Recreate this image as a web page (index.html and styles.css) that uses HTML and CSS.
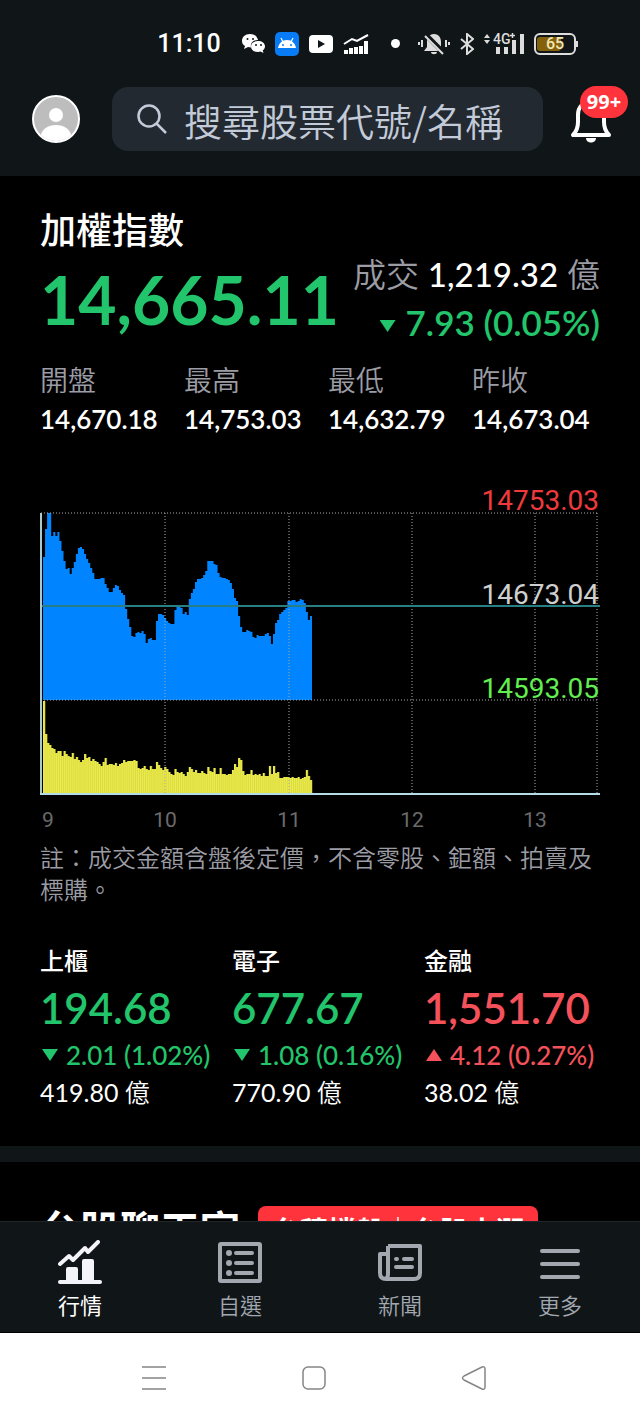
FILE: index.html
```
<!DOCTYPE html>
<html lang="zh-Hant">
<head>
  <meta charset="UTF-8">
  <title>加權指數</title>
  <meta name="viewport" content="width=device-width, initial-scale=1.0" />
  <link rel="stylesheet" href="styles.css">
</head>
<body>

<div class="status-bar">
  <span class="clock">11:10</span>
  <svg class="wechat" width="24" height="22" viewBox="0 0 24 22">
    <path fill="#fff" d="M9 1C4 1 1 4 1 8c0 2 1 4 3 5l-1 3 4-2 3 .4C9 9 13 7 17 7 16 3 13 1 9 1z"/>
    <path fill="#fff" d="M17 8c-4 0-7 2-7 5.500S13 19 17 19l2.500-.4L22.500 20l-.8-2.500C23 16.500 24 15 24 13.500 24 10 21 8 17 8z"/>
    <g fill="#101518"><circle cx="6.500" cy="6" r="1"/><circle cx="12" cy="6" r="1"/><circle cx="15" cy="12" r="1"/><circle cx="20" cy="12" r="1"/></g>
  </svg>
  <svg width="24" height="24" viewBox="0 0 24 24">
    <rect width="24" height="24" rx="5" fill="#087cf5"/>
    <path fill="#fff" d="M3 16c1-5 4-8 9-8s8 3 9 8z"/>
    <path stroke="#fff" stroke-width="1.200" d="M6 6l2 4M18 6l-2 4"/>
    <circle cx="8" cy="13" r="1" fill="#087cf5"/><circle cx="16" cy="13" r="1" fill="#087cf5"/>
  </svg>
  <svg width="24" height="18" viewBox="0 0 24 18">
    <rect width="24" height="18" rx="4" fill="#fff"/>
    <path fill="#101518" d="M9 5l7 4-7 4z"/>
  </svg>
  <svg width="26" height="20" viewBox="0 0 26 20">
    <path fill="none" stroke="#fff" stroke-width="2" d="M1 10l8-5 5 2L25 1"/>
    <path stroke="#fff" stroke-width="4" d="M3 20v-4M8 20v-6M13 20v-7M18 20v-8M23 20V7"/>
  </svg>
  <span class="dot"></span>
  <svg width="32" height="22" viewBox="0 0 32 22">
    <path fill="#ddd" d="M16 1c-5 0-7 4-7 8v5l-3 4h20l-3-4V9c0-4-2-8-7-8zM13 19h6c0 3-6 3-6 0z"/>
    <path stroke="#101518" stroke-width="5" d="M8 2l19 19"/>
    <path stroke="#ddd" stroke-width="2" d="M7 3l18 18M1 9v3M4 7v7M28 7v7M31 9v3"/>
  </svg>
  <svg width="14" height="22" viewBox="0 0 14 22">
    <path fill="none" stroke="#ddd" stroke-width="2" d="M1 6l12 10-6 5V1l6 5L1 16"/>
  </svg>
  <svg class="signal" width="40" height="22" viewBox="0 0 40 22">
    <path fill="#ddd" d="M0 5l3-4 3 4zM0 7h6l-3 4zM12 14h4v7h-4zM20 14h4v7h-4zM28 7h4v14h-4zM36 1h4v20h-4z"/>
    <text x="9" y="11">4G</text>
    <path stroke="#ddd" stroke-width="1.500" d="M26 2.500h5M28.500 0v5"/>
  </svg>
  <svg class="battery" width="45" height="22" viewBox="0 0 45 22">
    <rect x="3" y="4" width="24" height="14" rx="3" fill="#84610a"/>
    <rect x="1" y="1" width="40" height="20" rx="5" fill="none" stroke="#ddd" stroke-width="2"/>
    <path stroke="#ddd" stroke-width="2" d="M43 8v6"/>
    <text x="21" y="16">65</text>
  </svg>
</div>

<header class="top-bar">
  <button class="avatar" aria-label="帳號">
    <svg width="48" height="48" viewBox="0 0 48 48">
      <clipPath id="face"><circle cx="24" cy="24" r="22"/></clipPath>
      <circle cx="24" cy="24" r="23" fill="#bdbdbd" stroke="#fff" stroke-width="2"/>
      <g fill="#fff" clip-path="url(#face)"><circle cx="24" cy="20" r="7"/><ellipse cx="24" cy="41" rx="15" ry="11"/></g>
    </svg>
  </button>
  <label class="search">
    <svg width="32" height="32" viewBox="0 0 32 32" fill="none" stroke="#c3cad8" stroke-width="2.500">
      <circle cx="13" cy="13" r="10.500"/><path d="M20 20l10 10"/>
    </svg>
    <input type="text" placeholder="搜尋股票代號/名稱" aria-label="搜尋">
  </label>
  <button class="bell" aria-label="通知">
    <svg width="42" height="46" viewBox="0 0 42 46">
      <path fill="none" stroke="#fff" stroke-width="4" stroke-linejoin="round" d="M3 37h36c-4-4-5-8-5-13v-7c0-8-5-13-13-13S8 9 8 17v7c0 5-1 9-5 13z"/>
      <path fill="#fff" d="M16 40h10c0 6-10 6-10 0z"/>
    </svg>
    <span class="badge">99+</span>
  </button>
</header>

<main>
  <section class="index">
    <h1>加權指數</h1>
    <div class="quote">
      <div class="price down">14,665.11</div>
      <div class="quote-side">
        <div class="turnover">成交 <b>1,219.32</b> 億</div>
        <div class="change down"><i class="tri"></i>7.93 (0.05%)</div>
      </div>
    </div>
    <dl class="stats">
      <div><dt>開盤</dt><dd>14,670.18</dd></div>
      <div><dt>最高</dt><dd>14,753.03</dd></div>
      <div><dt>最低</dt><dd>14,632.79</dd></div>
      <div><dt>昨收</dt><dd>14,673.04</dd></div>
    </dl>
    <svg class="chart" viewBox="0 0 560 356">
      <path id="priceArea" fill="#0084ff"/>
      <path id="volumeArea" fill="#ecec4c"/>
      <path id="volumeLines" stroke="#c9c93c" stroke-width="0.500"/>
      <path class="grid" d="M1 33H558M1 220H558M125 33V314M249 33V314M372 33V314M495 33V314M557 33V314"/>
      <path stroke="#277f83" stroke-width="2" d="M1 126H560"/>
      <path stroke="#a9c9cd" stroke-width="2" d="M1 33V314"/>
      <path stroke="#b5dbe8" stroke-width="2" d="M0 314H560"/>
      <g class="level">
        <text x="559" y="30" fill="#ee3a3d">14753.03</text>
        <text x="559" y="124" fill="#cfcfcf">14673.04</text>
        <text x="559" y="218" fill="#62ee50">14593.05</text>
      </g>
      <g class="hour">
        <text x="8" y="347">9</text>
        <text x="125" y="347">10</text>
        <text x="249" y="347">11</text>
        <text x="372" y="347">12</text>
        <text x="495" y="347">13</text>
      </g>
    </svg>
    <p class="note">註：成交金額含盤後定價，不含零股、鉅額、拍賣及標購。</p>
    <div class="sectors">
      <article>
        <h2>上櫃</h2>
        <div class="sector-price down">194.68</div>
        <div class="sector-change down"><i class="tri"></i>2.01 (1.02%)</div>
        <div class="amount">419.80 <span>億</span></div>
      </article>
      <article>
        <h2>電子</h2>
        <div class="sector-price down">677.67</div>
        <div class="sector-change down"><i class="tri"></i>1.08 (0.16%)</div>
        <div class="amount">770.90 <span>億</span></div>
      </article>
      <article>
        <h2>金融</h2>
        <div class="sector-price up">1,551.70</div>
        <div class="sector-change up"><i class="tri"></i>4.12 (0.27%)</div>
        <div class="amount">38.02 <span>億</span></div>
      </article>
    </div>
  </section>
  <section class="chat">
    <h2>台股聊天室</h2>
    <a class="topic" href="#">台積撐盤｜台股大漲</a>
  </section>
</main>

<nav class="tabs">
  <a class="active" href="#">
    <svg width="44" height="44" viewBox="0 0 44 44">
      <path fill="none" stroke="#f2f4fa" stroke-width="4" stroke-linecap="round" stroke-linejoin="round" d="M2 24l9-8 4 4L27 8l3 4L40 2"/>
      <path fill="#f2f4fa" d="M8 41V29q0-2 2-2h8q2 0 2 2v12zM24 41V21q0-2 2-2h8q2 0 2 2v20z"/>
      <path stroke="#f2f4fa" stroke-width="4" stroke-linecap="round" d="M2 42h40"/>
    </svg>
    行情
  </a>
  <a href="#">
    <svg width="44" height="44" viewBox="0 0 44 44" stroke="#a2a7b0" stroke-width="4" fill="none">
      <rect x="2" y="4" width="40" height="37" rx="1"/>
      <path stroke-linecap="round" d="M18 13h16M18 23h16M18 33h16"/>
      <g fill="#a2a7b0" stroke="none"><circle cx="11" cy="13" r="3"/><circle cx="11" cy="23" r="3"/><circle cx="11" cy="33" r="3"/></g>
    </svg>
    自選
  </a>
  <a href="#">
    <svg width="44" height="44" viewBox="0 0 44 44" stroke="#a2a7b0" stroke-width="4" fill="none" stroke-linejoin="round">
      <path d="M10 6h32v27q0 6-6 6H8q-6 0-6-6V14h8M10 6v28q0 5-4 5"/>
      <path stroke-linecap="round" d="M18 19h1M26 19h8M18 27h16"/>
    </svg>
    新聞
  </a>
  <a href="#">
    <svg width="44" height="44" viewBox="0 0 44 44" stroke="#a2a7b0" stroke-width="4" stroke-linecap="round">
      <path d="M4 11h36M4 24h36M4 37h36"/>
    </svg>
    更多
  </a>
</nav>

<div class="system-bar">
  <button aria-label="最近">
    <svg width="26" height="26" viewBox="0 0 26 26"><path d="M1 2h24M1 13h24M1 24h24"/></svg>
  </button>
  <button aria-label="主畫面">
    <svg width="26" height="26" viewBox="0 0 26 26"><rect x="2" y="2" width="22" height="22" rx="5"/></svg>
  </button>
  <button aria-label="返回">
    <svg width="26" height="26" viewBox="0 0 26 26"><path d="M3 11L21 2q3-1 3 2v18q0 3-3 2L3 15q-3-2 0-4z"/></svg>
  </button>
</div>

<script src="chart.js"></script>
</body>
</html>
```
FILE: styles.css
```
* {
  box-sizing: border-box;
}

body {
  margin: 0;
  height: 100vh;
  display: flex;
  flex-direction: column;
  overflow: hidden;
  background: #000;
  color: #fff;
  font-family: Lato, "Noto Sans CJK TC", sans-serif;
}

button {
  padding: 0;
  border: none;
  background: none;
}

svg {
  display: block;
  flex-shrink: 0;
}

h1, h2, p, dl, dd {
  margin: 0;
}

.up {
  color: #f5515a;
}

.down {
  color: #22c56b;
}

/* status bar */
.status-bar {
  display: flex;
  align-items: center;
  justify-content: center;
  gap: 10px;
  height: 87px;
  padding-left: 96px;
  background: #101518;
}

.clock {
  font: 500 25px Roboto, sans-serif;
  margin-right: 10px;
}

.dot {
  width: 9px;
  height: 9px;
  margin: 0 8px 0 12px;
  border-radius: 50%;
  background: #fff;
}

.signal text {
  font: 500 14px Roboto, sans-serif;
  fill: #ddd;
}

.battery text {
  font: 500 16px Roboto, sans-serif;
  fill: #f3e7b5;
  text-anchor: middle;
}

/* search header */
.top-bar {
  display: flex;
  align-items: center;
  height: 89px;
  flex-shrink: 0;
  padding: 0 28px 25px 32px;
  background: #101518;
}

.search {
  display: flex;
  align-items: center;
  gap: 16px;
  flex: 1;
  min-width: 0;
  height: 64px;
  margin: 0 27px 0 32px;
  padding: 0 24px;
  border-radius: 16px;
  background: #222930;
}

.search input {
  flex: 1;
  min-width: 0;
  padding: 0;
  border: none;
  outline: none;
  background: none;
  color: #c3cad8;
  font-family: "Noto Sans CJK TC", sans-serif;
  font-size: 38px;
  font-weight: 350;
}

.search input::placeholder {
  color: #c3cad8;
}

.bell {
  position: relative;
  padding-top: 4px;
}

.badge {
  position: absolute;
  top: -8px;
  left: 10px;
  width: 48px;
  border-radius: 16px;
  background: #ff333b;
  color: #fff;
  font: 700 20px/32px "Noto Sans", sans-serif;
  text-align: center;
}

/* main index */
main {
  flex: 1;
  min-height: 0;
  overflow: hidden;
}

.index {
  padding: 30px 40px 36px;
  border-bottom: 16px solid #101518;
}

h1 {
  font-size: 36px;
  font-weight: 500;
  line-height: 48px;
}

.quote {
  display: flex;
  justify-content: space-between;
  white-space: nowrap;
}

.price {
  font-size: 66px;
  font-weight: 700;
  line-height: 92px;
}

.quote-side {
  margin-top: -4px;
  text-align: right;
  line-height: 48px;
}

.turnover {
  color: #9b9ca4;
  font-size: 33px;
  font-weight: 350;
}

.turnover b {
  color: #fff;
  font-weight: 500;
}

.change {
  font-size: 35px;
  font-weight: 600;
}

.tri {
  display: inline-block;
  width: 16px;
  height: 12px;
  margin-right: 10px;
  background: currentColor;
  clip-path: polygon(0 0, 100% 0, 50% 100%);
  vertical-align: 4px;
}

.up .tri {
  clip-path: polygon(50% 0, 100% 100%, 0 100%);
}

.stats {
  display: grid;
  grid-template-columns: repeat(4, 1fr);
  margin: 14px -16px 42px 0;
}

.stats dt {
  color: #9b9ca4;
  font-size: 28px;
  font-weight: 350;
  line-height: 40px;
}

.stats dd {
  font-size: 26px;
  font-weight: 600;
  line-height: 38px;
}

/* chart */
.chart {
  width: 100%;
}

.grid {
  stroke: #aaa;
  stroke-dasharray: 1 2;
}

.level text {
  font: 28px Roboto, sans-serif;
  text-anchor: end;
}

.hour text {
  font: 21px Roboto, sans-serif;
  fill: #6b6b6b;
  text-anchor: middle;
}

.note {
  margin-top: 6px;
  color: #9b9ca4;
  font-size: 24px;
  font-weight: 350;
  line-height: 32px;
}

/* sectors */
.sectors {
  display: grid;
  grid-template-columns: repeat(3, 1fr);
  margin: 36px -16px 0 0;
  white-space: nowrap;
}

.sectors h2 {
  font-size: 24px;
  font-weight: 500;
  line-height: 38px;
}

.sector-price {
  font-size: 42px;
  font-weight: 600;
  line-height: 56px;
}

.sector-change {
  font-size: 26px;
  font-weight: 500;
  line-height: 38px;
}

.sector-change .tri {
  margin: 0 8px 0 2px;
}

.amount {
  font-size: 25px;
  font-weight: 400;
  line-height: 36px;
}

.amount span {
  font-weight: 350;
}

/* chat */
.chat {
  display: flex;
  align-items: flex-start;
  gap: 18px;
  padding: 44px 40px;
  white-space: nowrap;
}

.chat h2 {
  font-size: 40px;
  font-weight: 700;
  line-height: 48px;
}

.topic {
  padding: 0 14px;
  border-radius: 8px;
  background: #ff333b;
  color: #fff;
  font-size: 28px;
  font-weight: 700;
  line-height: 50px;
  text-decoration: none;
}

/* bottom bars */
.tabs {
  display: grid;
  grid-template-columns: repeat(4, 1fr);
  height: 112px;
  padding-top: 18px;
  border-top: 1px solid #20262a;
  border-bottom: 1px solid #000;
  background: #101518;
}

.tabs a {
  display: flex;
  flex-direction: column;
  align-items: center;
  gap: 6px;
  color: #a2a7b0;
  font-size: 22px;
  font-weight: 350;
  line-height: 32px;
  text-decoration: none;
}

.tabs .active {
  color: #fff;
  font-weight: 400;
}

.system-bar {
  display: flex;
  align-items: center;
  justify-content: center;
  gap: 134px;
  height: 89px;
  padding-right: 12px;
  background: #fff;
}

.system-bar svg {
  fill: none;
  stroke: #858585;
  stroke-width: 1.500;
}
```
FILE: chart.js
```
// one value per minute from 09:00: distance below the day's high
const price = [
  44, 16, 0, 0, 23, 19, 23, 19, 28, 38, 48, 56, 55, 61, 55, 49, 41, 35, 34, 36,
  41, 46, 50, 55, 60, 66, 66, 66, 65, 65, 71, 75, 79, 79, 75, 72, 73, 77, 80, 82,
  96, 106, 114, 123, 124, 120, 119, 120, 118, 121, 130, 126, 125, 127, 127, 108, 101, 101, 102, 105,
  108, 110, 111, 111, 97, 94, 92, 95, 101, 99, 102, 86, 80, 76, 69, 66, 66, 65, 62, 58,
  48, 48, 48, 51, 52, 60, 64, 65, 65, 66, 67, 70, 76, 85, 88, 103, 114, 119, 119, 117,
  118, 119, 124, 125, 122, 123, 123, 123, 121, 120, 123, 131, 121, 110, 107, 101, 99, 97, 95, 88,
  88, 87, 87, 89, 88, 86, 87, 90, 99, 107, 103
];

const volume = [
  93, 60, 51, 49, 46, 45, 41, 43, 43, 38, 43, 40, 38, 37, 41, 35, 37, 34, 32, 34,
  40, 36, 37, 33, 35, 33, 32, 30, 28, 32, 36, 29, 30, 30, 29, 31, 28, 30, 31, 34,
  32, 33, 33, 33, 34, 33, 26, 25, 26, 28, 25, 24, 28, 25, 25, 32, 29, 26, 24, 27,
  25, 22, 20, 19, 25, 22, 21, 22, 20, 18, 22, 27, 25, 22, 24, 21, 21, 23, 21, 20,
  27, 23, 22, 26, 20, 20, 26, 20, 20, 19, 20, 20, 24, 30, 27, 36, 34, 23, 19, 20,
  20, 24, 19, 20, 19, 20, 18, 21, 18, 18, 28, 20, 28, 21, 22, 16, 16, 17, 17, 17,
  16, 17, 16, 16, 17, 15, 16, 17, 24, 18, 14
];

const left = 3;
const step = 269 / price.length;

function area(values, base, toY) {
  let d = `M${left} ${base}`;
  values.forEach((v, i) => {
    d += `V${toY(v)}H${(left + (i + 1) * step).toFixed(2)}`;
  });
  return d + `V${base}Z`;
}

document.getElementById("priceArea").setAttribute("d", area(price, 220, v => 33 + v));
document.getElementById("volumeArea").setAttribute("d", area(volume, 314, v => 314 - v));
document.getElementById("volumeLines").setAttribute("d",
  volume.map((v, i) => `M${(left + (i + 1) * step).toFixed(2)} 314V${314 - v}`).join(""));
```
